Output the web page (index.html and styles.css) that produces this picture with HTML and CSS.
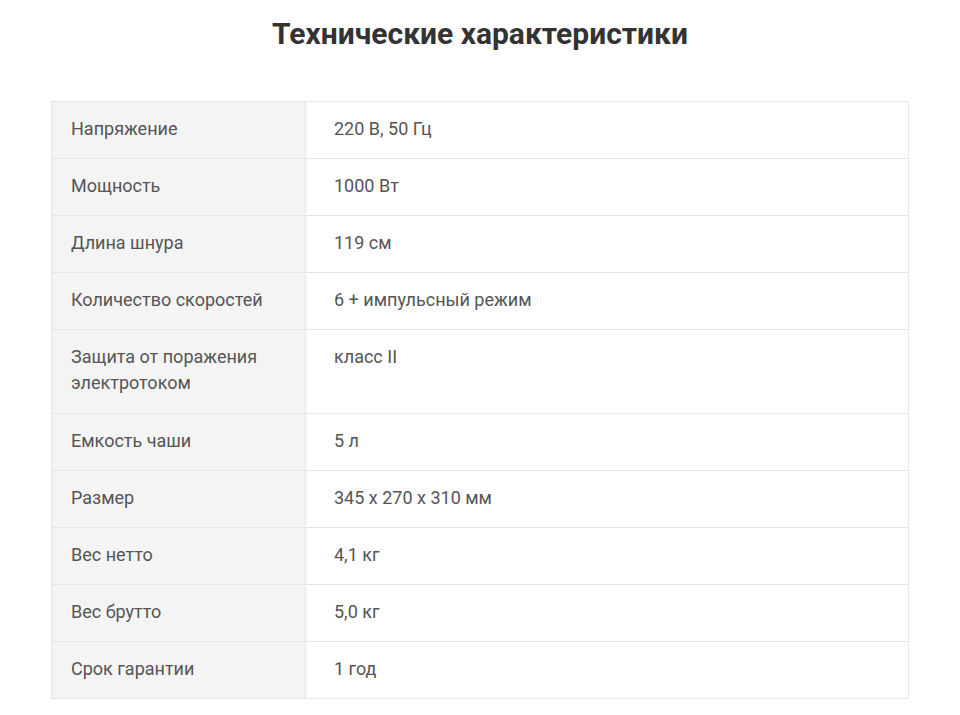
FILE: index.html
```html
<!DOCTYPE html>
<html lang="ru">
<head>
<meta charset="utf-8">
<link rel="stylesheet" href="styles.css">
</head>
<body>
<main class="page">
  <h1 class="title">Технические характеристики</h1>
  <table class="specs">
    <tr><td class="k">Напряжение</td><td class="v">220 В, 50 Гц</td></tr>
    <tr><td class="k">Мощность</td><td class="v">1000 Вт</td></tr>
    <tr><td class="k">Длина шнура</td><td class="v">119 см</td></tr>
    <tr><td class="k">Количество скоростей</td><td class="v">6 + импульсный режим</td></tr>
    <tr class="tall"><td class="k">Защита от поражения<br>электротоком</td><td class="v">класс II</td></tr>
    <tr><td class="k">Емкость чаши</td><td class="v">5 л</td></tr>
    <tr><td class="k">Размер</td><td class="v">345 x 270 x 310 мм</td></tr>
    <tr><td class="k">Вес нетто</td><td class="v">4,1 кг</td></tr>
    <tr><td class="k">Вес брутто</td><td class="v">5,0 кг</td></tr>
    <tr><td class="k">Срок гарантии</td><td class="v">1 год</td></tr>
  </table>
</main>
</body>
</html>
```
FILE: styles.css
```css
html, body {
  margin: 0;
  padding: 0;
  background: #fff;
}
body {
  font-family: Roboto, "Noto Sans", sans-serif;
  color: #555;
}
.page {
  width: 858px;
  margin: 0 0 0 51px;
  padding-top: 16px;
}
.title {
  margin: 0 0 49px;
  text-align: center;
  font-size: 30px;
  line-height: 36px;
  font-weight: 700;
  color: #333;
}
.specs {
  width: 858px;
  border-collapse: collapse;
  border: 1px solid #e6e6e6;
  font-size: 18px;
  line-height: 26px;
}
.specs td {
  border-top: 1px solid #e6e6e6;
  vertical-align: top;
  padding: 14px 20px 16px;
}
.specs .tall td {
  padding-bottom: 17px;
}
.specs .k {
  width: 214px;
  background: #f4f4f4;
  border-right: 1px solid #e6e6e6;
  padding-left: 19px;
}
.specs .v {
  padding-left: 28px;
}
```
